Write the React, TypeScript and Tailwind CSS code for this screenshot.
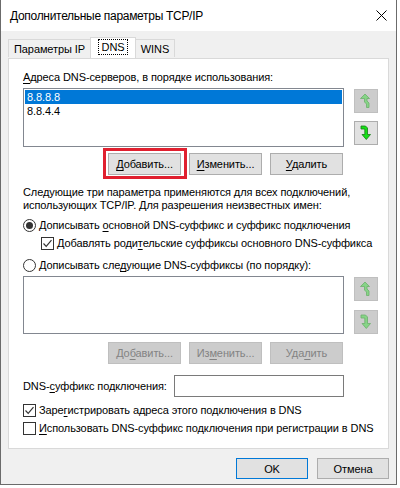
import type { ReactNode } from "react";

function U({ children }: { children: ReactNode }) {
  return <span className="underline underline-offset-[2px]">{children}</span>;
}

function Btn({
  children,
  disabled,
  w = "w-[73px]",
}: {
  children: ReactNode;
  disabled?: boolean;
  w?: string;
}) {
  return (
    <div
      className={`${w} h-[22px] flex items-center justify-center border ${
        disabled
          ? "bg-[#cccccc] border-[#bfbfbf] text-[#838383]"
          : "bg-[#e1e1e1] border-[#adadad] text-black"
      }`}
    >
      {children}
    </div>
  );
}

function ArrowUp({ disabled }: { disabled?: boolean }) {
  return (
    <div className="w-[24px] h-[24px] bg-[#cccccc] border border-[#bfbfbf] flex items-center justify-center">
      <svg width="12" height="16" viewBox="0 0 12 16">
        <path
          d="M5 1 L9.5 5.5 L7 5.5 L7 8 L9 10 L9 14.5 L6.5 14.5 L6.5 11 L4.5 9 L4.5 5.5 L0.5 5.5 Z"
          fill={disabled ? "#86d486" : "#22d022"}
          stroke={disabled ? "#6cae6c" : "#1a7f1a"}
          strokeWidth="0.8"
          strokeLinejoin="round"
        />
      </svg>
    </div>
  );
}

function ArrowDown({ disabled }: { disabled?: boolean }) {
  return (
    <div
      className={`w-[24px] h-[24px] border flex items-center justify-center ${
        disabled ? "bg-[#cccccc] border-[#bfbfbf]" : "bg-[#e1e1e1] border-[#adadad]"
      }`}
    >
      <svg width="12" height="16" viewBox="0 0 12 16">
        <path
          d="M1 1 L5.5 1 L7.5 3 L7.5 9.5 L10.5 9.5 L6.3 14.5 L2 9.5 L4.8 9.5 L4.8 4 L1 4 Z"
          fill={disabled ? "#86d486" : "#16e016"}
          stroke={disabled ? "#6cae6c" : "#167a16"}
          strokeWidth="0.8"
          strokeLinejoin="round"
        />
      </svg>
    </div>
  );
}

function Check({ checked }: { checked?: boolean }) {
  return (
    <span className="w-[13px] h-[13px] border border-[#333333] bg-white flex items-center justify-center shrink-0">
      {checked && (
        <svg width="11" height="11" viewBox="0 0 11 11">
          <path d="M1.5 5.5 L4.2 8.3 L9.5 2.2" fill="none" stroke="#333333" strokeWidth="1.2" />
        </svg>
      )}
    </span>
  );
}

function Radio({ checked }: { checked?: boolean }) {
  return (
    <span className="w-[13px] h-[13px] rounded-full border border-[#333333] bg-white flex items-center justify-center shrink-0">
      {checked && <span className="w-[7px] h-[7px] rounded-full bg-[#333333]" />}
    </span>
  );
}

export default function App() {
  return (
    <div className="w-[397px] h-[485px] border-x border-b border-[#6b6b6b] bg-[#f0f0f0] text-[11px] tracking-[-0.1px] leading-[14px] text-black whitespace-nowrap font-['Liberation_Sans',Arial,sans-serif] flex flex-col">
      {/* title bar */}
      <div className="h-[31px] bg-white flex items-center justify-between pl-[9px] pr-[8px] shrink-0 text-[12px] tracking-[-0.3px]">
        <span>Дополнительные параметры TCP/IP</span>
        <svg width="11" height="11" viewBox="0 0 11 11" className="mr-[1px]">
          <path d="M0.5 0.5 L10.5 10.5 M10.5 0.5 L0.5 10.5" stroke="#000" strokeWidth="1" />
        </svg>
      </div>

      <div className="px-[7px] pt-[7px] flex flex-col">
        {/* tabs */}
        <div className="flex items-end h-[20px] relative z-10">
          <div className="h-[18px] w-[82px] border-t border-l border-[#d9d9d9] bg-[#f0f0f0] flex items-center justify-center mb-[1px]">
            Параметры IP
          </div>
          <div className="h-[21px] w-[46px] bg-white border-t border-x border-[#d9d9d9] flex items-start justify-center pt-[2px]">
            <span className="outline-1 outline-dotted outline-black px-[3px]">DNS</span>
          </div>
          <div className="h-[18px] w-[39px] border-t border-r border-[#d9d9d9] bg-[#f0f0f0] flex items-center justify-center mb-[1px]">
            WINS
          </div>
        </div>

        {/* panel */}
        <div className="h-[391px] bg-white border border-[#d9d9d9] pl-[14px] flex flex-col">
          <div className="mt-[11px]">
            <U>А</U>дреса DNS-серверов, в порядке использования:
          </div>

          <div className="flex mt-[4px]">
            <div className="w-[321px] h-[59px] border border-[#828790] p-[1px]">
              <div className="h-[14px] bg-[#0078d7] text-white pl-[2px] leading-[14px]">8.8.8.8</div>
              <div className="h-[14px] pl-[2px] leading-[14px]">8.8.4.4</div>
            </div>
            <div className="ml-[10px] mt-[1px] flex flex-col gap-[8px]">
              <ArrowUp disabled />
              <ArrowDown />
            </div>
          </div>

          <div className="w-[321px] mt-[6px] flex justify-end gap-[8px] pr-[1px]">
            <div className="relative">
              <span className="absolute -left-[5px] -right-[6px] -top-[5px] -bottom-[4px] border-[3px] border-[#e0202f]" />
              <Btn>
                <span>
                  <U>Д</U>обавить...
                </span>
              </Btn>
            </div>
            <Btn>
              <span>
                <U>И</U>зменить...
              </span>
            </Btn>
            <Btn>
              <span>
                <U>У</U>далить
              </span>
            </Btn>
          </div>

          <div className="mt-[11px] leading-[13px]">
            Следующие три параметра применяются для всех подключений,
            <br />
            использующих TCP/IP. Для разрешения неизвестных имен:
          </div>

          <div className="mt-[6px] flex items-center gap-[3px] h-[14px]">
            <Radio checked />
            <span>
              Дописывать <U>о</U>сновной DNS-суффикс и суффикс подключения
            </span>
          </div>
          <div className="mt-[4px] ml-[18px] flex items-center gap-[3px] h-[14px]">
            <Check checked />
            <span>
              Добавлять роди<U>т</U>ельские суффиксы основного DNS-суффикса
            </span>
          </div>
          <div className="mt-[8px] flex items-center gap-[3px] h-[14px]">
            <Radio />
            <span>
              Дописывать сле<U>д</U>ующие DNS-суффиксы (по порядку):
            </span>
          </div>

          <div className="flex mt-[4px]">
            <div className="w-[321px] h-[58px] border border-[#828790]" />
            <div className="ml-[10px] mt-[1px] flex flex-col gap-[9px]">
              <ArrowUp disabled />
              <ArrowDown disabled />
            </div>
          </div>

          <div className="w-[321px] mt-[8px] flex justify-end gap-[8px] pr-[1px]">
            <Btn disabled>
              <span>
                До<U>б</U>авить...
              </span>
            </Btn>
            <Btn disabled>
              <span>
                Из<U>м</U>енить...
              </span>
            </Btn>
            <Btn disabled>
              <span>
                Уда<U>л</U>ить
              </span>
            </Btn>
          </div>

          <div className="mt-[11px] flex items-center h-[22px]">
            <span className="w-[151px]">
              DNS-<U>с</U>уффикс подключения:
            </span>
            <div className="w-[170px] h-[22px] border border-[#7a7a7a] bg-white" />
          </div>

          <div className="mt-[6px] flex items-center gap-[3px] h-[14px]">
            <Check checked />
            <span>
              Заре<U>г</U>истрировать адреса этого подключения в DNS
            </span>
          </div>
          <div className="mt-[4px] flex items-center gap-[3px] h-[14px]">
            <Check />
            <span>
              <U>И</U>спользовать DNS-суффикс подключения при регистрации в DNS
            </span>
          </div>
        </div>

        {/* dialog buttons */}
        <div className="mt-[9px] flex justify-end gap-[9px]">
          <div className="w-[72px] h-[21px] bg-[#e1e1e1] border border-[#0078d7] flex items-center justify-center">
            OK
          </div>
          <div className="w-[72px] h-[21px] bg-[#e1e1e1] border border-[#adadad] flex items-center justify-center">
            Отмена
          </div>
        </div>
      </div>
    </div>
  );
}
